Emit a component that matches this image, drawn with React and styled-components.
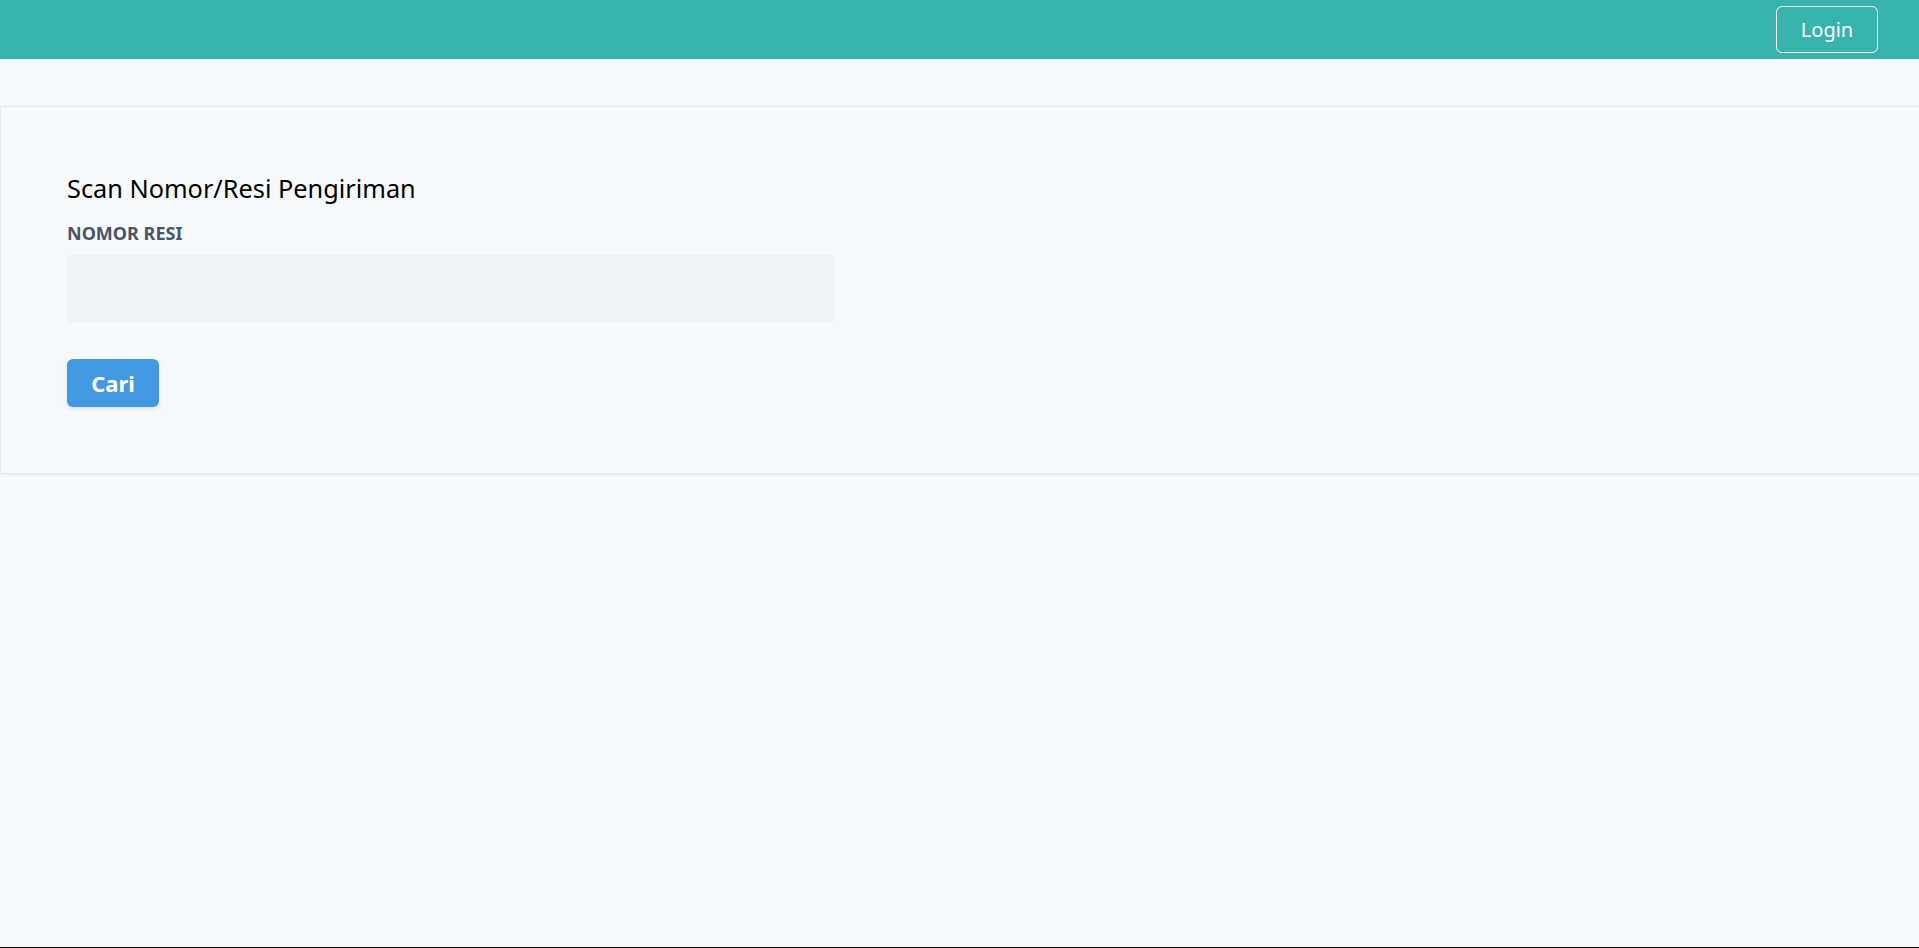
import React, { useState } from 'react';
import styled, { createGlobalStyle } from 'styled-components';

const GlobalStyle = createGlobalStyle`
  html, body {
    margin: 0;
    padding: 0;
    background-color: #f7fafc;
    overflow: hidden;
  }

  body {
    font-family: 'Noto Sans', 'Open Sans', sans-serif;
    color: #000000;
  }

  * {
    box-sizing: border-box;
  }
`;

const Page = styled.div`
  min-height: 100vh;
  display: flex;
  flex-direction: column;
  background-color: #f7fafc;
  border-bottom: 1px solid #000000;
`;

const TopBar = styled.header`
  height: 59px;
  background-color: #38b2ac;
  display: flex;
  align-items: center;
  justify-content: flex-end;
  padding-right: 41px;
`;

const LoginButton = styled.button`
  width: 102px;
  height: 47px;
  background: transparent;
  border: 1px solid #ffffff;
  border-radius: 6px;
  color: #ffffff;
  font-family: 'Noto Sans', 'Open Sans', sans-serif;
  font-size: 20px;
  cursor: pointer;
`;

const Card = styled.section`
  margin-top: 47px;
  width: calc(100% + 10px);
  border: 1px solid #e2e8f0;
  border-right: none;
  box-shadow: 0 1px 3px rgba(0, 0, 0, 0.08);
  background-color: #f7fafc;
  padding: 63px 66px 66px;
`;

const Form = styled.form`
  display: flex;
  flex-direction: column;
  align-items: flex-start;
`;

const Title = styled.h2`
  margin: 0;
  font-size: 25.3px;
  font-weight: 400;
  line-height: 36px;
  color: #000000;
`;

const Label = styled.label`
  margin-top: 15px;
  font-size: 18px;
  font-weight: 700;
  line-height: 24px;
  color: #4a5568;
  text-transform: uppercase;
`;

const Input = styled.input`
  margin-top: 10px;
  width: 768px;
  height: 68px;
  border: none;
  border-radius: 6px;
  background-color: #edf2f7;
  padding: 0 20px;
  font-size: 20px;
  font-family: inherit;
  color: #4a5568;

  &:focus {
    outline: none;
    background-color: #ffffff;
  }
`;

const SubmitButton = styled.button`
  margin-top: 36px;
  width: 92px;
  height: 48px;
  border: none;
  border-radius: 6px;
  background-color: #4299e1;
  color: #ffffff;
  font-family: 'Noto Sans', 'Open Sans', sans-serif;
  font-size: 22px;
  font-weight: 700;
  box-shadow: 0 2px 4px rgba(0, 0, 0, 0.1);
  cursor: pointer;

  &:hover {
    background-color: #3182ce;
  }
`;

const App = () => {
  const [resi, setResi] = useState('');

  const handleSubmit = (e) => {
    e.preventDefault();
  };

  return (
    <>
      <GlobalStyle />
      <Page>
        <TopBar>
          <LoginButton type="button">Login</LoginButton>
        </TopBar>
        <Card>
          <Form onSubmit={handleSubmit}>
            <Title>Scan Nomor/Resi Pengiriman</Title>
            <Label htmlFor="resi">Nomor Resi</Label>
            <Input
              id="resi"
              type="text"
              value={resi}
              onChange={(e) => setResi(e.target.value)}
            />
            <SubmitButton type="submit">Cari</SubmitButton>
          </Form>
        </Card>
      </Page>
    </>
  );
};

export default App;
